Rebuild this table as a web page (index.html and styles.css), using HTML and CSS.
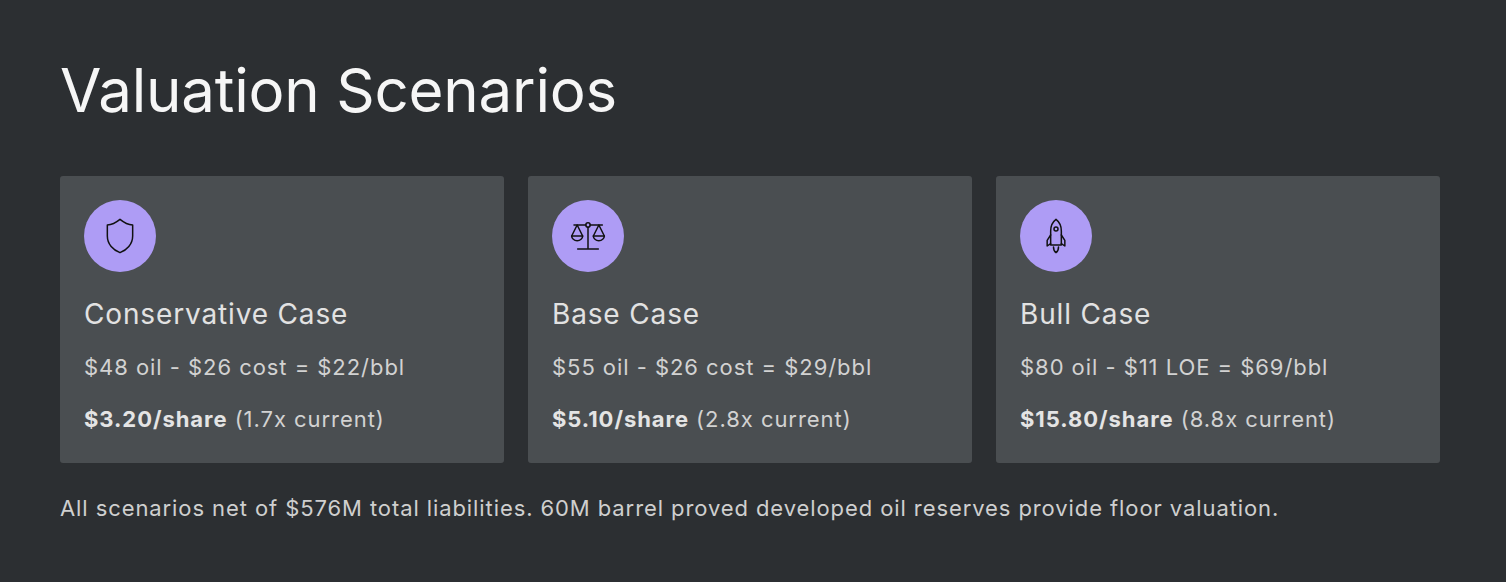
FILE: index.html
```html
<!DOCTYPE html>
<html lang="en">
<head>
<meta charset="utf-8">
<title>Valuation Scenarios</title>
<link rel="stylesheet" href="styles.css">
</head>
<body>
<main class="page">
  <h1 class="heading">Valuation Scenarios</h1>
  <section class="cards">
    <article class="card">
      <div class="icon">
        <svg viewBox="0 0 24 24" width="40" height="40" fill="none" stroke="#111" stroke-width="0.9" stroke-linejoin="round" stroke-linecap="round">
          <path d="M12 2 C14.5 4 17 5.2 19.6 5.4 V12 C19.6 17 16 20.5 12 22 C8 20.5 4.4 17 4.4 12 V5.4 C7 5.2 9.5 4 12 2 Z"/>
        </svg>
      </div>
      <h2 class="title">Conservative Case</h2>
      <p class="calc">$48 oil - $26 cost = $22/bbl</p>
      <p class="value"><strong>$3.20/share</strong> (1.7x current)</p>
    </article>
    <article class="card">
      <div class="icon">
        <svg viewBox="0 0 24 24" width="40" height="40" fill="none" stroke="#111" stroke-width="0.9" stroke-linejoin="round" stroke-linecap="round">
          <circle cx="12" cy="5.4" r="1.3"/>
          <path d="M3.6 5.4 H10.7 M13.3 5.4 H20.6"/>
          <path d="M12 6.7 V19.8 M5.8 19.8 H18.2"/>
          <path d="M2.2 12 L5.5 5.4 L8.8 12"/>
          <path d="M2.2 12 H8.8 A3.3 2.8 0 0 1 2.2 12 Z"/>
          <path d="M15.2 12 L18.5 5.4 L21.8 12"/>
          <path d="M15.2 12 H21.8 A3.3 2.8 0 0 1 15.2 12 Z"/>
        </svg>
      </div>
      <h2 class="title">Base Case</h2>
      <p class="calc">$55 oil - $26 cost = $29/bbl</p>
      <p class="value"><strong>$5.10/share</strong> (2.8x current)</p>
    </article>
    <article class="card">
      <div class="icon">
        <svg viewBox="0 0 24 24" width="40" height="40" fill="none" stroke="#111" stroke-width="0.9" stroke-linejoin="round" stroke-linecap="round">
          <path d="M12 2 C10 3.5 8.8 6 8.8 9 V17.4 H15.2 V9 C15.2 6 14 3.5 12 2 Z"/>
          <circle cx="12" cy="7.8" r="1.2"/>
          <path d="M8.8 11.4 L6.7 14.6 V18 L8.8 16.6"/>
          <path d="M15.2 11.4 L17.3 14.6 V18 L15.2 16.6"/>
          <path d="M10.5 18.6 C10.5 20.4 11 21.4 12 22 C13 21.4 13.5 20.4 13.5 18.6"/>
        </svg>
      </div>
      <h2 class="title">Bull Case</h2>
      <p class="calc">$80 oil - $11 LOE = $69/bbl</p>
      <p class="value"><strong>$15.80/share</strong> (8.8x current)</p>
    </article>
  </section>
  <p class="note">All scenarios net of $576M total liabilities. 60M barrel proved developed oil reserves provide floor valuation.</p>
</main>
</body>
</html>
```

FILE: styles.css
```css
* { box-sizing: border-box; }
html, body {
  margin: 0;
  background: #2c2f32;
}
body {
  font-family: Inter, "Noto Sans", sans-serif;
  color: #d6d6d6;
}
.page {
  padding: 54px 66px 40px 60px;
}
.heading {
  margin: 0 0 50px;
  font-family: Inter, sans-serif;
  font-weight: 400;
  font-size: 60px;
  line-height: 72px;
  color: #f6f6f6;
  letter-spacing: -0.2px;
}
.cards {
  display: grid;
  grid-template-columns: repeat(3, 1fr);
  gap: 24px;
}
.card {
  background: #4a4e51;
  border-radius: 3px;
  padding: 24px 24px 29px;
}
.icon {
  width: 72px;
  height: 72px;
  border-radius: 50%;
  background: #ae9cf5;
  display: flex;
  align-items: center;
  justify-content: center;
  margin-bottom: 24px;
}
.icon svg { display: block; }
.title {
  margin: 0 0 20px;
  font-size: 28px;
  font-weight: 400;
  line-height: 36px;
  letter-spacing: 0.85px;
  color: #e2e2e2;
}
.calc {
  margin: 0 0 22px;
  font-size: 22px;
  line-height: 30px;
  letter-spacing: 0.95px;
  color: #d2d2d2;
}
.value {
  margin: 0;
  font-size: 22px;
  line-height: 30px;
  letter-spacing: 0.95px;
  color: #d2d2d2;
}
.value strong {
  font-weight: 700;
  color: #e4e4e4;
}
.note {
  margin: 30px 0 0;
  font-size: 22px;
  line-height: 30px;
  letter-spacing: 0.91px;
  color: #cfcfcf;
}
```
